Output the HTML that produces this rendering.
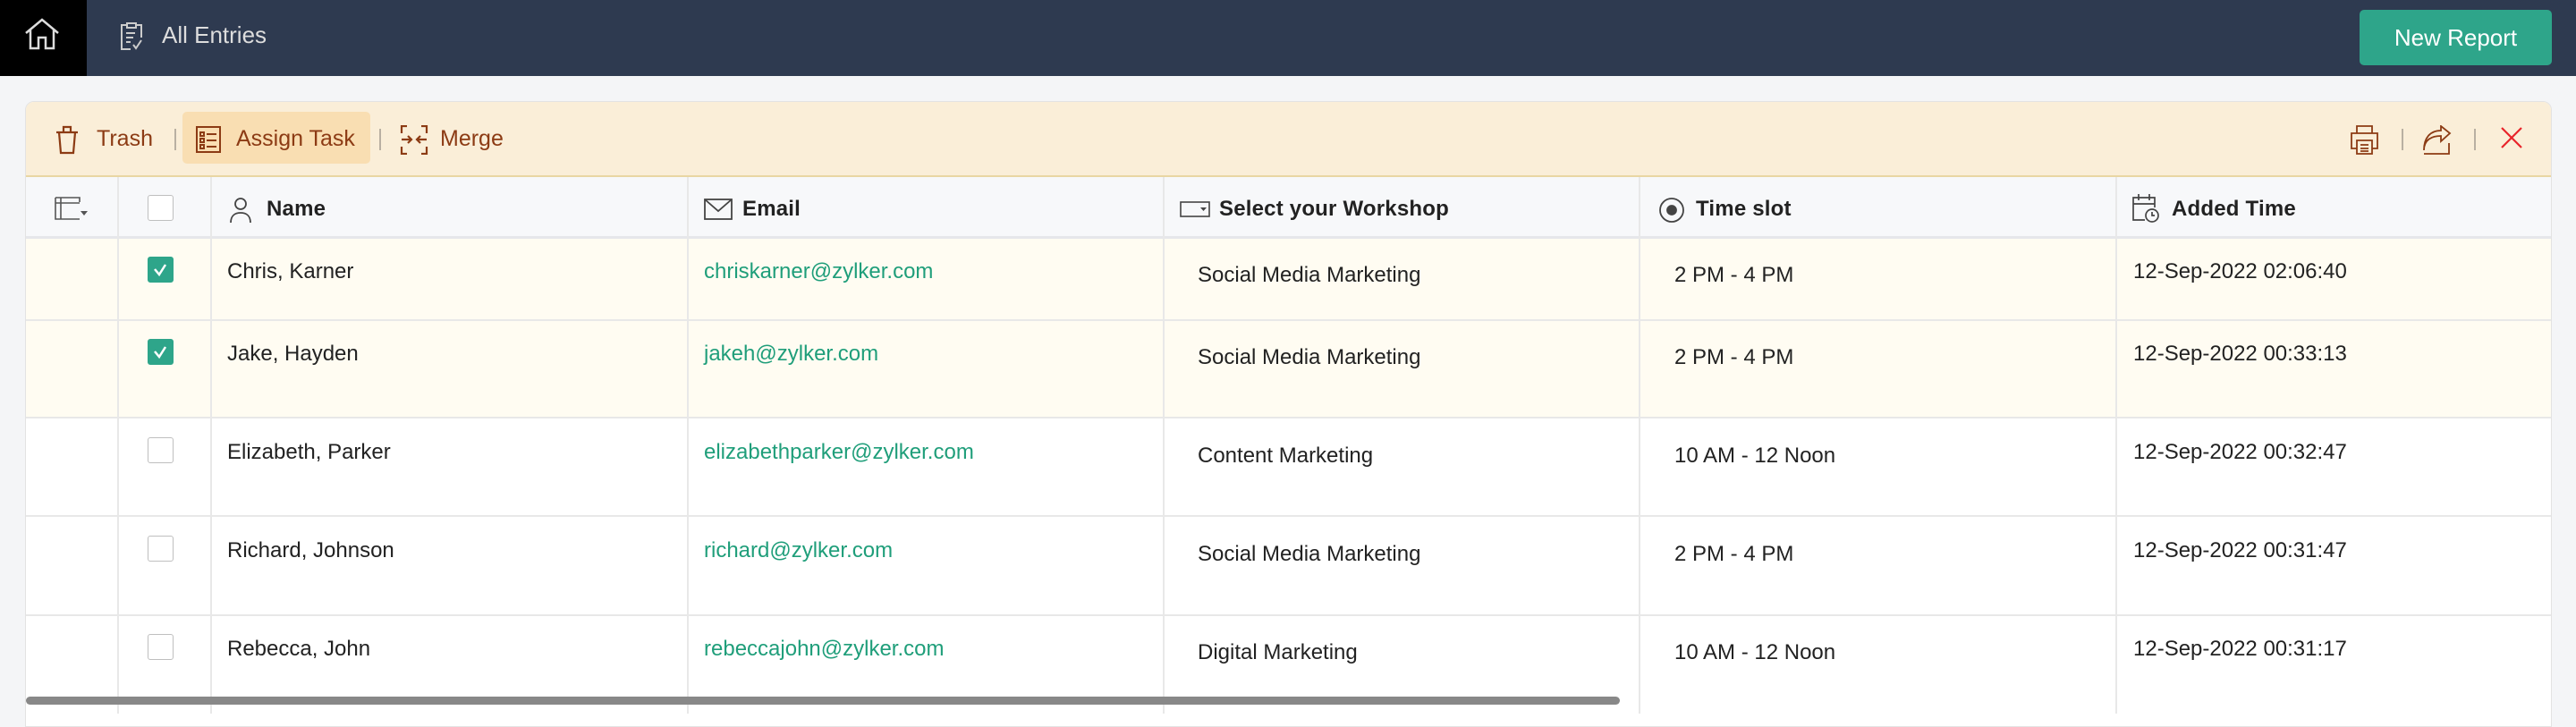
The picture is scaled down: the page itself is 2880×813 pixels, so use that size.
<!DOCTYPE html>
<html><head><meta charset="utf-8"><style>
*{margin:0;padding:0;box-sizing:border-box}
body{width:2880px;height:806px;background:#f4f5f7;font-family:"Liberation Sans",sans-serif;position:relative;overflow:hidden}
.a{position:absolute}
.top{left:0;top:0;width:2880px;height:85px;background:#2e3a50}
.home{left:0;top:0;width:97px;height:85px;background:#000}
.btn{left:2638px;top:11px;width:215px;height:62px;background:#2ea58a;border-radius:5px;color:#fff;font-size:26px;text-align:center;line-height:62px}
.card{left:28px;top:113px;width:2825px;height:700px;background:#fff;border:1px solid #e3e3e3;border-radius:10px 10px 0 0;overflow:hidden}
.card>.a:not(.fw){margin-left:-9px}
.tb{left:0;top:0;width:2834px;height:84px;background:#faeed8;border-bottom:2px solid #e9d6a3}
.tt{color:#8c3b14;font-size:25px;top:27px}
.sep{width:2px;height:24px;background:#b9b0a2;top:30px}
.hdr{left:0;top:84px;width:2834px;height:69px;background:#f7f8fa;border-bottom:3px solid #e6e7ea}
.ht{font-size:24px;color:#222;top:106px;font-weight:bold;letter-spacing:0.2px}
.vl{width:2px;background:#e8e8e8;top:84px;height:600px}
.hl{height:2px;background:#e8e8e8;left:0;width:2834px}
.sel{left:0;width:2834px;background:#fffcf2}
.cell{font-size:24px;color:#222}
.em{color:#1f9e7a}
.cb{width:29px;height:29px;border:1.5px solid #bfbfbf;border-radius:3px;background:#fff;left:145px}
.cbc{background:#2ea58a;border-color:#2ea58a}
</style></head><body>
<div class="a top"></div>
<div class="a home"></div>
<svg class="a" style="left:26px;top:20px" width="42" height="36" viewBox="0 0 42 36" fill="none" stroke="#ddd" stroke-width="2.5"><path d="M3 17 L21 2 L39 17 M8 13 V34 H17 V22 H25 V34 H34 V13"/></svg>
<svg class="a" style="left:133px;top:24px" width="28" height="32" viewBox="0 0 28 32" fill="none" stroke="#ccc" stroke-width="2"><path d="M9 4H3V31H13 M19 4H25V18 M9 2H19V7H9Z M8 13H18 M8 18H16 M8 23H13 M16 26l3 4 6-9"/></svg>
<div class="a" style="left:181px;top:24px;color:#ddd;font-size:26px">All Entries</div>
<div class="a btn">New Report</div>
<div class="a card">
 <div class="a tb fw"></div>
 <svg class="a" style="left:42px;top:26px" width="26" height="33" viewBox="0 0 26 33" fill="none" stroke="#8c3b14" stroke-width="2.2"><path d="M1 8H25 M9 8V2H17V8 M4 8L6 31H20L22 8"/></svg>
 <div class="a tt" style="left:88px">Trash</div>
 <div class="a sep" style="left:175px"></div>
 <div class="a" style="left:184px;top:11px;width:210px;height:58px;background:#f9deb2;border-radius:5px"></div>
 <svg class="a" style="left:199px;top:27px" width="28" height="30" viewBox="0 0 28 30" fill="none" stroke="#8c3b14" stroke-width="2"><rect x="1" y="1" width="26" height="28"/><path d="M5 7h4v4H5z M5 14h4v4H5z M5 21h4v4H5z M12 9h11 M12 16h11 M12 23h11"/></svg>
 <div class="a tt" style="left:244px">Assign Task</div>
 <div class="a sep" style="left:404px"></div>
 <svg class="a" style="left:427px;top:26px" width="32" height="33" viewBox="0 0 32 33" fill="none" stroke="#8c3b14" stroke-width="2.2"><path d="M8 1H2V9 M24 1H30V9 M8 32H2V24 M24 32H30V24 M2 16H13 M9 12l4 4-4 4 M30 16H19 M23 12l-4 4 4 4"/></svg>
 <div class="a tt" style="left:472px">Merge</div>
 <svg class="a" style="left:2607px;top:26px" width="33" height="33" viewBox="0 0 33 33" fill="none" stroke="#8c3b14" stroke-width="1.8"><path d="M8 9V1H25V9 M8 26H2V9H31V26H25 M8 17H25V32H8Z M12 22H21 M12 26H21 M12 29H21"/></svg>
 <div class="a sep" style="left:2665px"></div>
 <svg class="a" style="left:2689px;top:26px" width="32" height="33" viewBox="0 0 32 33" fill="none" stroke="#8c3b14" stroke-width="1.8"><path d="M1 32H29V20 M1 28C1 16 10 12 20 12V18L30 9L20 1V6C8 6 1 14 1 28"/></svg>
 <div class="a sep" style="left:2746px"></div>
 <svg class="a" style="left:2776px;top:28px" width="24" height="24" viewBox="0 0 24 24" stroke="#e8242a" stroke-width="2.2"><path d="M1 1L23 23M23 1L1 23"/></svg>

 <div class="a hdr fw"></div>
 <div class="a sel fw" style="top:153px;height:92px"></div>
 <div class="a sel fw" style="top:245px;height:108px"></div>
 <div class="a hl fw" style="top:243px"></div>
 <div class="a hl fw" style="top:352px"></div>
 <div class="a hl fw" style="top:462px"></div>
 <div class="a hl fw" style="top:573px"></div>
 <div class="a vl" style="left:111px"></div>
 <div class="a vl" style="left:215px"></div>
 <div class="a vl" style="left:748px"></div>
 <div class="a vl" style="left:1280px"></div>
 <div class="a vl" style="left:1812px"></div>
 <div class="a vl" style="left:2345px"></div>

 <svg class="a" style="left:41px;top:106px" width="38" height="26" viewBox="0 0 38 26" fill="none" stroke="#555" stroke-width="1.6"><path d="M1 1H28V6 M1 1V25H28 M1 7H28 M7 1V25"/><path d="M29 16h8l-4 5z" fill="#555" stroke="none"/></svg>
 <div class="a cb" style="top:104px"></div>
 <svg class="a" style="left:237px;top:106px" width="24" height="30" viewBox="0 0 24 30" fill="none" stroke="#444" stroke-width="1.8"><circle cx="12" cy="8" r="6"/><path d="M1 29C1 21 6 18 12 18S23 21 23 29"/></svg>
 <div class="a ht" style="left:278px">Name</div>
 <svg class="a" style="left:767px;top:108px" width="32" height="24" viewBox="0 0 32 24" fill="none" stroke="#444" stroke-width="1.8"><rect x="1" y="1" width="30" height="22"/><path d="M1 1L16 14L31 1"/></svg>
 <div class="a ht" style="left:810px">Email</div>
 <svg class="a" style="left:1299px;top:111px" width="34" height="18" viewBox="0 0 34 18" fill="none" stroke="#444" stroke-width="1.6"><rect x="1" y="1" width="32" height="16"/><path d="M23 7h7l-3.5 4z" fill="#444" stroke="none"/></svg>
 <div class="a ht" style="left:1343px">Select your Workshop</div>
 <svg class="a" style="left:1834px;top:106px" width="30" height="30" viewBox="0 0 30 30" fill="none" stroke="#444" stroke-width="1.8"><circle cx="15" cy="15" r="13"/><circle cx="15" cy="15" r="5" fill="#444"/></svg>
 <div class="a ht" style="left:1876px">Time slot</div>
 <svg class="a" style="left:2364px;top:102px" width="30" height="34" viewBox="0 0 30 34" fill="none" stroke="#444" stroke-width="1.7"><path d="M14 30H1V5H25V16 M1 12H25 M7 1V8 M19 1V8"/><circle cx="22" cy="25" r="7"/><path d="M22 21v4h3"/></svg>
 <div class="a ht" style="left:2408px">Added Time</div>

 <div class="a cb cbc" style="top:173px"><svg width="26" height="26" viewBox="0 0 26 26" fill="none" stroke="#fff" stroke-width="2.5"><path d="M7 13l5 6 7-11"/></svg></div>
 <div class="a cell" style="left:234px;top:176px">Chris, Karner</div>
 <div class="a cell em" style="left:767px;top:176px">chriskarner@zylker.com</div>
 <div class="a cell" style="left:1319px;top:180px">Social Media Marketing</div>
 <div class="a cell" style="left:1852px;top:180px">2 PM - 4 PM</div>
 <div class="a cell" style="left:2365px;top:176px">12-Sep-2022 02:06:40</div>

 <div class="a cb cbc" style="top:265px"><svg width="26" height="26" viewBox="0 0 26 26" fill="none" stroke="#fff" stroke-width="2.5"><path d="M7 13l5 6 7-11"/></svg></div>
 <div class="a cell" style="left:234px;top:268px">Jake, Hayden</div>
 <div class="a cell em" style="left:767px;top:268px">jakeh@zylker.com</div>
 <div class="a cell" style="left:1319px;top:272px">Social Media Marketing</div>
 <div class="a cell" style="left:1852px;top:272px">2 PM - 4 PM</div>
 <div class="a cell" style="left:2365px;top:268px">12-Sep-2022 00:33:13</div>

 <div class="a cb" style="top:375px"></div>
 <div class="a cell" style="left:234px;top:378px">Elizabeth, Parker</div>
 <div class="a cell em" style="left:767px;top:378px">elizabethparker@zylker.com</div>
 <div class="a cell" style="left:1319px;top:382px">Content Marketing</div>
 <div class="a cell" style="left:1852px;top:382px">10 AM - 12 Noon</div>
 <div class="a cell" style="left:2365px;top:378px">12-Sep-2022 00:32:47</div>

 <div class="a cb" style="top:485px"></div>
 <div class="a cell" style="left:234px;top:488px">Richard, Johnson</div>
 <div class="a cell em" style="left:767px;top:488px">richard@zylker.com</div>
 <div class="a cell" style="left:1319px;top:492px">Social Media Marketing</div>
 <div class="a cell" style="left:1852px;top:492px">2 PM - 4 PM</div>
 <div class="a cell" style="left:2365px;top:488px">12-Sep-2022 00:31:47</div>

 <div class="a cb" style="top:595px"></div>
 <div class="a cell" style="left:234px;top:598px">Rebecca, John</div>
 <div class="a cell em" style="left:767px;top:598px">rebeccajohn@zylker.com</div>
 <div class="a cell" style="left:1319px;top:602px">Digital Marketing</div>
 <div class="a cell" style="left:1852px;top:602px">10 AM - 12 Noon</div>
 <div class="a cell" style="left:2365px;top:598px">12-Sep-2022 00:31:17</div>

 <div class="a fw" style="left:0px;top:665px;width:1782px;height:9px;background:#888;border-radius:5px"></div>
</div>
</body></html>
